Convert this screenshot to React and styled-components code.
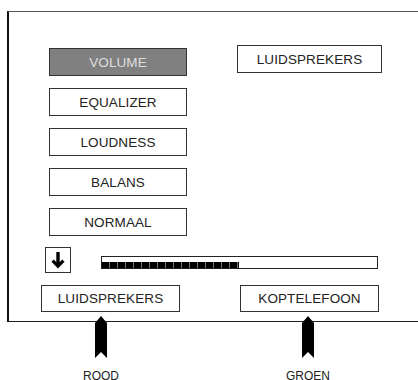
import React from "react";
import styled, { createGlobalStyle } from "styled-components";

const GlobalStyle = createGlobalStyle`
  html, body {
    margin: 0;
    padding: 0;
    background: #ffffff;
    overflow: hidden;
  }
  body {
    font-family: "Liberation Sans", Arial, sans-serif;
    color: #222;
  }
`;

const Page = styled.div`
  width: 418px;
  height: 380px;
  overflow: hidden;
  padding: 11px 0 0 7px;
  box-sizing: border-box;
`;

const Frame = styled.div`
  width: 440px;
  box-sizing: border-box;
  border-top: 1px solid #555;
  border-left: 2px solid #111;
  border-bottom: 1px solid #222;
  padding: 33px 0 9px 0;
  display: flex;
  flex-direction: column;
`;

const TopSection = styled.div`
  display: flex;
  align-items: flex-start;
  padding-left: 40px;
  gap: 50px;
`;

const MenuColumn = styled.div`
  display: flex;
  flex-direction: column;
  gap: 12px;
  margin-top: 3px;
`;

const Button = styled.div`
  width: ${(p) => p.$width || 138}px;
  height: ${(p) => p.$height || 28}px;
  box-sizing: border-box;
  border: 1px solid #333;
  background: ${(p) => (p.$active ? "#808080" : "#ffffff")};
  color: ${(p) => (p.$active ? "#dedede" : "#222")};
  display: flex;
  align-items: center;
  justify-content: center;
  font-size: 13.5px;
  letter-spacing: 0.1px;
`;

const ControlRow = styled.div`
  display: flex;
  align-items: flex-end;
  margin-top: 11px;
  padding-left: 36px;
  gap: 30px;
`;

const ArrowBox = styled.div`
  width: 26px;
  height: 26px;
  box-sizing: border-box;
  border: 1px solid #333;
  display: flex;
  align-items: center;
  justify-content: center;
`;

const Bar = styled.div`
  width: 277px;
  height: 13px;
  box-sizing: border-box;
  border: 1px solid #222;
  margin-bottom: 4px;
  display: flex;
  align-items: flex-end;
`;

const BarFill = styled.div`
  height: 6px;
  background: repeating-linear-gradient(
    to right,
    #000 0px,
    #000 7px,
    #777 7px,
    #777 8px
  );
`;

const BottomRow = styled.div`
  display: flex;
  margin-top: 12px;
  padding-left: 32px;
  gap: 60px;
`;

const Legend = styled.div`
  display: flex;
  margin-top: -6px;
  padding-left: 47px;
  gap: 113px;
`;

const LegendItem = styled.div`
  width: 94px;
  display: flex;
  flex-direction: column;
  align-items: center;
`;

const LegendLabel = styled.div`
  margin-top: 11px;
  font-size: 12px;
  color: #222;
`;

const DownArrow = () => (
  <svg width="14" height="17" viewBox="0 0 14 17" aria-hidden="true">
    <path d="M7 0 V14" stroke="#000" strokeWidth="3.4" fill="none" />
    <path
      d="M1.6 8.6 L7 14.2 L12.4 8.6"
      stroke="#000"
      strokeWidth="3.2"
      fill="none"
      strokeLinejoin="miter"
    />
  </svg>
);

const Marker = () => (
  <svg width="12" height="42" viewBox="0 0 12 42" aria-hidden="true">
    <path d="M6 0 L12 7 L12 42 L6 36 L0 42 L0 7 Z" fill="#000" />
  </svg>
);

const menu = ["VOLUME", "EQUALIZER", "LOUDNESS", "BALANS", "NORMAAL"];

export default function App() {
  const level = 137;
  return (
    <Page>
      <GlobalStyle />
      <Frame>
        <TopSection>
          <MenuColumn>
            {menu.map((item, i) => (
              <Button key={item} $active={i === 0}>
                {item}
              </Button>
            ))}
          </MenuColumn>
          <Button $width={145}>LUIDSPREKERS</Button>
        </TopSection>
        <ControlRow>
          <ArrowBox>
            <DownArrow />
          </ArrowBox>
          <Bar>
            <BarFill style={{ width: level }} />
          </Bar>
        </ControlRow>
        <BottomRow>
          <Button $width={139} $height={27}>
            LUIDSPREKERS
          </Button>
          <Button $width={139} $height={27}>
            KOPTELEFOON
          </Button>
        </BottomRow>
      </Frame>
      <Legend>
        <LegendItem>
          <Marker />
          <LegendLabel>ROOD</LegendLabel>
        </LegendItem>
        <LegendItem>
          <Marker />
          <LegendLabel>GROEN</LegendLabel>
        </LegendItem>
      </Legend>
    </Page>
  );
}
